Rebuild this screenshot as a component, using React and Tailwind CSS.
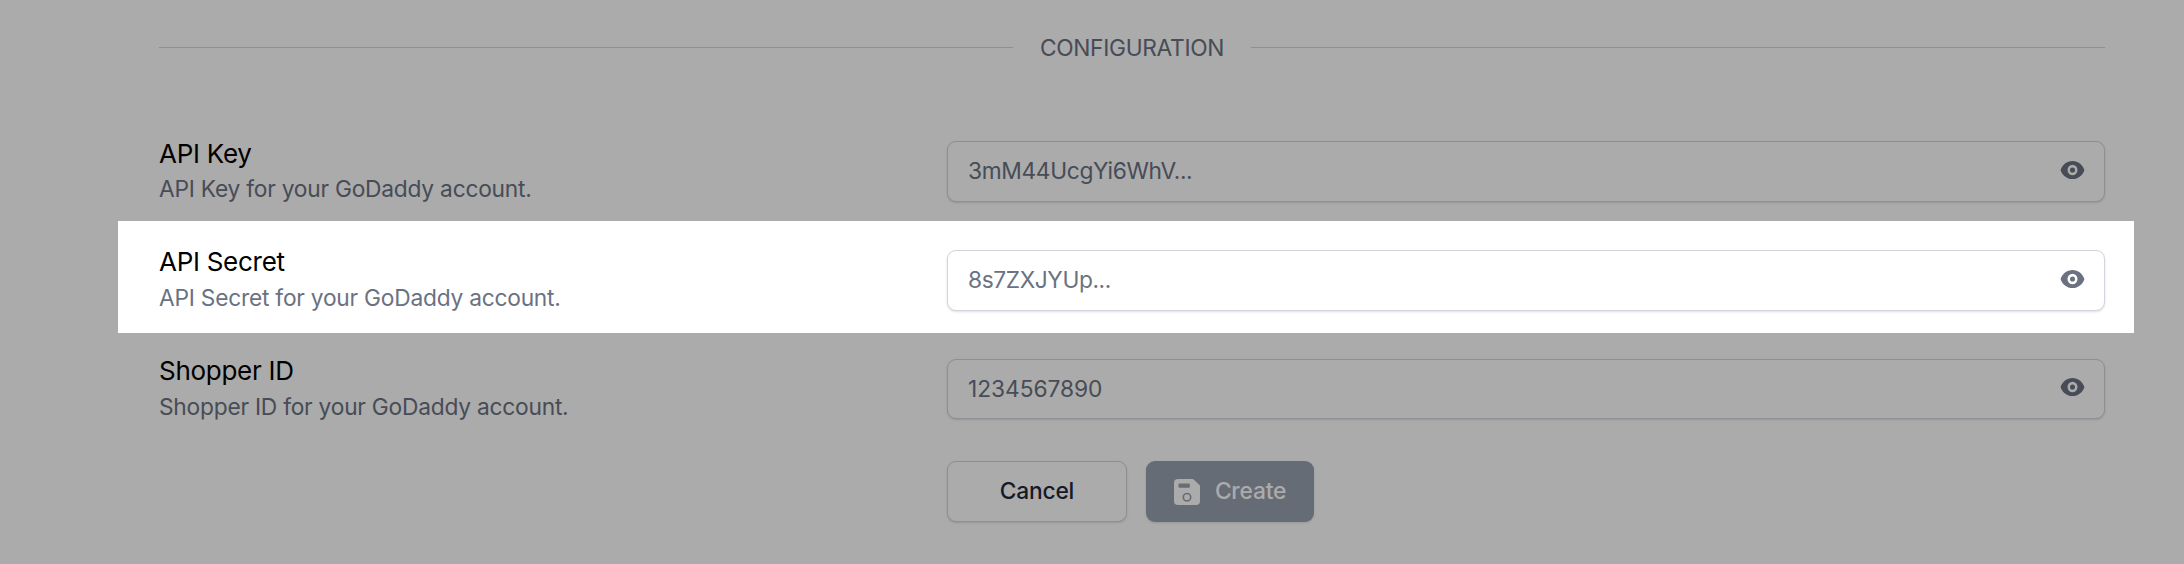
const fields = [
  { label: "API Key", hint: "API Key for your GoDaddy account.", value: "3mM44UcgYi6WhV...", height: "h-[61px]", tracking: "tracking-[-0.34px]", offset: "-mt-[5px] -mb-px" },
  { label: "API Secret", hint: "API Secret for your GoDaddy account.", value: "8s7ZXJYUp...", height: "h-[61px]", tracking: "tracking-[-0.4px]", offset: "-mt-[6px]" },
  { label: "Shopper ID", hint: "Shopper ID for your GoDaddy account.", value: "1234567890", height: "h-[60px]", tracking: "tracking-[-0.05px]", offset: "-mt-[6px]" },
];

function EyeIcon() {
  return (
    <svg viewBox="0 0 20 20" preserveAspectRatio="none" className="mb-[4px] h-[26px] w-[25px] text-gray-500" fill="currentColor">
      <path d="M10 12a2 2 0 100-4 2 2 0 000 4z" />
      <path
        fillRule="evenodd"
        clipRule="evenodd"
        d="M.458 10C1.732 5.943 5.522 3 10 3s8.268 2.943 9.542 7c-1.274 4.057-5.064 7-9.542 7S1.732 14.057.458 10zM14 10a4 4 0 11-8 0 4 4 0 018 0z"
      />
    </svg>
  );
}

function SaveIcon() {
  return (
    <svg viewBox="0 0 26 26" className="h-[26px] w-[26px]">
      <path d="M4 0h15l7 6.500v15.500a4 4 0 0 1-4 4H4a4 4 0 0 1-4-4V4a4 4 0 0 1 4-4z" fill="white" />
      <rect x="4.500" y="4.500" width="11.300" height="4.200" rx="0.800" fill="#9ca3af" />
      <circle cx="13" cy="18.200" r="3.700" fill="none" stroke="#9ca3af" strokeWidth="1.700" />
    </svg>
  );
}

function FieldRow({ label, hint, value, height, tracking, offset }) {
  return (
    <div className="flex h-[61px] items-start">
      <div className="w-[788px] shrink-0">
        <div className={`${offset} text-[26px] leading-[36px] tracking-[-0.28px] text-black`}>{label}</div>
        <div className="text-[22.75px] leading-[36px] tracking-[-0.23px] text-gray-500">{hint}</div>
      </div>
      <div className={`flex ${height} ${tracking} flex-1 items-center justify-between rounded-[9px] border border-gray-300 bg-white pl-[20px] pr-[19px] text-[22.75px] text-gray-500 shadow-sm`}>
        <span>{value}</span>
        <EyeIcon />
      </div>
    </div>
  );
}

export default function App() {
  return (
    <div className="relative h-[564px] w-[2184px] overflow-hidden bg-white pl-[159px] pr-[79px] pt-[30px] font-['Inter',sans-serif]">
      <div className="flex h-[36px] items-center">
        <div className="mb-[2px] h-px flex-1 bg-gray-300" />
        <div className="px-[27px] text-[22.75px] leading-[36px] tracking-[-0.32px] text-gray-500">CONFIGURATION</div>
        <div className="mb-[2px] h-px flex-1 bg-gray-300" />
      </div>
      <div className="mt-[75px] flex flex-col gap-[48px]">
        {fields.map((f) => (
          <FieldRow key={f.label} {...f} />
        ))}
      </div>
      <div className="mt-[41px] flex gap-[19px] pl-[788px] text-[22.75px] font-medium tracking-[-0.2px]">
        <button className="h-[61px] w-[180px] rounded-[9px] border border-gray-300 bg-white text-gray-800 shadow-sm">Cancel</button>
        <button className="flex h-[61px] w-[168px] items-center justify-center gap-[15px] rounded-[9px] bg-gray-400 text-white shadow-sm">
          <SaveIcon />
          Create
        </button>
      </div>
      <div className="pointer-events-none absolute left-[118px] top-[221px] h-[112px] w-[2016px] shadow-[0_0_0_2200px_rgba(0,0,0,0.33)]" />
    </div>
  );
}
